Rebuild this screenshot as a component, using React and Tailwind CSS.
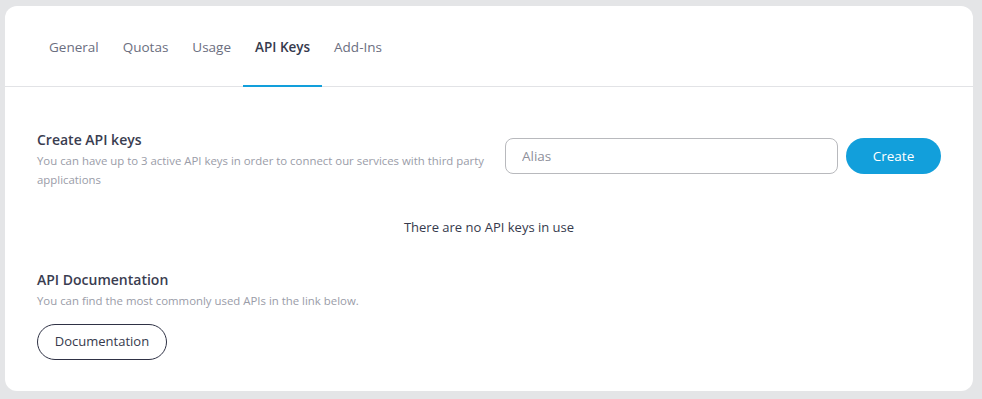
import { useState } from 'react'

const tabs = ['General', 'Quotas', 'Usage', 'API Keys', 'Add-Ins']

const App = () => {
  const [active, setActive] = useState('API Keys')
  const [alias, setAlias] = useState('')

  return (
    <div className="min-h-[399px] bg-[#e4e5e7] pl-[5px] pr-[9px] pt-[6px] pb-[8px]" style={{ fontFamily: '"Open Sans", "Liberation Sans", sans-serif' }}>
      <div className="h-[385px] rounded-[12px] bg-white">
        {/* Tabs */}
        <div className="flex h-[81px] border-b border-[#e2e3e6] px-[32px]">
          {tabs.map((tab) => (
            <button
              key={tab}
              onClick={() => setActive(tab)}
              className={
                'relative flex h-full items-center px-[12px] pt-[2px] text-[13.5px] ' +
                (active === tab ? 'font-semibold text-[#363a4d]' : 'text-[#6b6e80]')
              }
            >
              {tab}
              {active === tab && <span className="absolute right-0 bottom-[-1px] left-0 h-[2px] bg-[#129fdb]" />}
            </button>
          ))}
        </div>

        <div className="px-[32px] pt-[43px]">
          {/* Create API keys */}
          <div className="flex items-start justify-between">
            <div className="w-[460px]">
              <h3 className="text-[14px] leading-[20px] font-semibold text-[#3a3d50]">Create API keys</h3>
              <p className="mt-[1px] text-[11.4px] leading-[19px] text-[#9a9ca8]">
                You can have up to 3 active API keys in order to connect our services with third party applications
              </p>
            </div>
            <div className="mt-[8px] flex gap-[8px]">
              <input
                value={alias}
                onChange={(e) => setAlias(e.target.value)}
                placeholder="Alias"
                className="h-[36px] w-[333px] rounded-[8px] border border-[#b8b9bd] px-[16px] text-[13.5px] text-[#363a4d] outline-none placeholder:text-[#8e909b]"
              />
              <button className="h-[36px] w-[95px] rounded-full bg-[#129fdb] text-[13.5px] text-white">Create</button>
            </div>
          </div>

          <p className="mt-[29px] text-center text-[13px] text-[#363a4d]">There are no API keys in use</p>

          {/* API Documentation */}
          <div className="mt-[32px]">
            <h3 className="text-[14px] leading-[20px] font-semibold text-[#3a3d50]">API Documentation</h3>
            <p className="mt-[1px] text-[11.4px] leading-[19px] text-[#9a9ca8]">
              You can find the most commonly used APIs in the link below.
            </p>
            <button className="mt-[14px] h-[36px] w-[130px] rounded-full border border-[#2f3245] text-[13px] text-[#363a4d]">
              Documentation
            </button>
          </div>
        </div>
      </div>
    </div>
  )
}

export default App
